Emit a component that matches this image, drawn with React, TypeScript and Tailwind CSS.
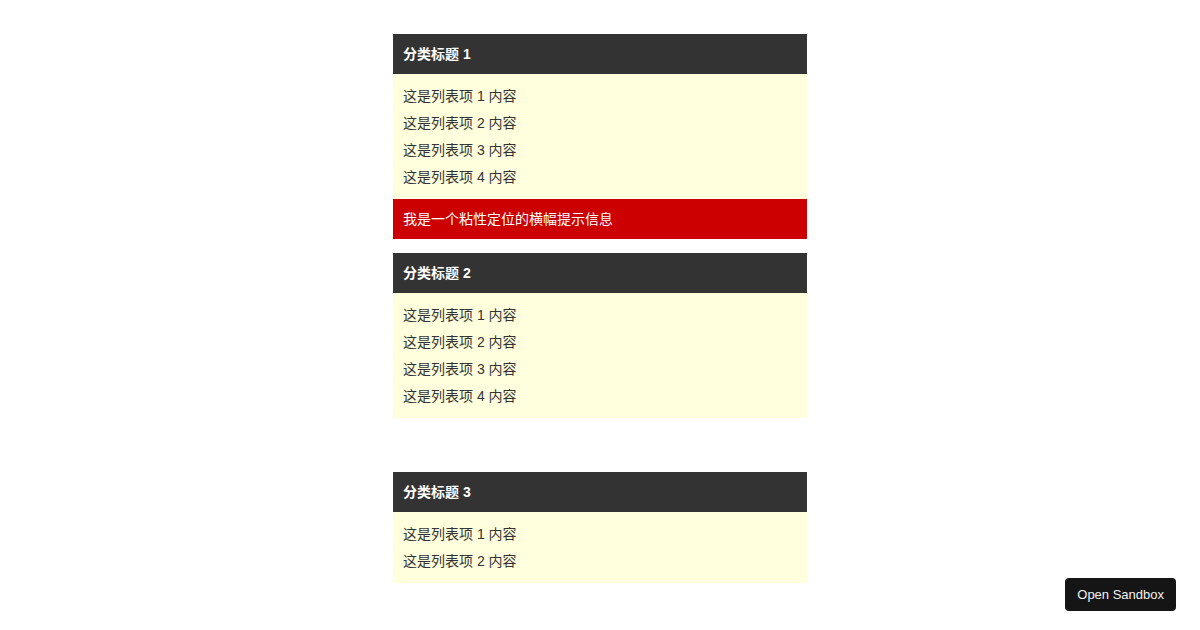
const sections = [
  { title: '分类标题 1', items: [1, 2, 3, 4], banner: true, gap: 'mb-[14px]' },
  { title: '分类标题 2', items: [1, 2, 3, 4], banner: false, gap: 'mb-[54px]' },
  { title: '分类标题 3', items: [1, 2], banner: false, gap: '' },
];

export default function App() {
  return (
    <div
      className="min-h-screen bg-white"
      style={{ fontFamily: '"Liberation Sans", "Noto Sans CJK SC", sans-serif' }}
    >
      <div className="w-[414px] mx-auto pt-[34px]">
        {sections.map((s) => (
          <section key={s.title} className={s.gap}>
            {/* Header */}
            <div className="h-10 bg-[#333333] text-white text-[14px] font-bold px-[10px] flex items-center">
              {s.title}
            </div>
            {/* List */}
            <ul className="bg-[#ffffdd] px-[10px] pt-[9px] pb-2 text-[14px] leading-[27px] text-[#333333]">
              {s.items.map((n) => (
                <li key={n}>这是列表项 {n} 内容</li>
              ))}
            </ul>
            {s.banner && (
              <div className="h-10 bg-[#cc0000] text-white text-[14px] px-[10px] flex items-center">
                我是一个粘性定位的横幅提示信息
              </div>
            )}
          </section>
        ))}
      </div>

      <button className="fixed right-6 bottom-[19px] h-[33px] px-3 rounded bg-[#151515] text-[#f2f2f2] text-[13px]">
        Open Sandbox
      </button>
    </div>
  );
}
